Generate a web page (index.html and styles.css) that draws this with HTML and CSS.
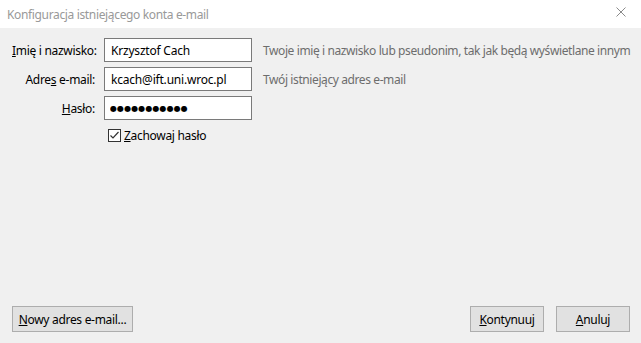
FILE: index.html
```html
<!DOCTYPE html>
<html lang="pl">
<head>
    <meta charset="UTF-8">
    <title>Konfiguracja istniejącego konta e-mail</title>
    <link rel="stylesheet" href="styles.css">
</head>
<body>
    <div class="window">
        <div class="titlebar">
            <span class="title">Konfiguracja istniejącego konta e-mail</span>
            <svg class="close" width="10" height="10" viewBox="0 0 10 10">
                <path d="M0.5 0.5 L9.5 9.5 M9.5 0.5 L0.5 9.5" stroke="#8a8a8a" stroke-width="1" fill="none"/>
            </svg>
        </div>
        <form class="content">
            <div class="fields">
                <label for="name"><u>I</u>mię i nazwisko:</label>
                <input type="text" id="name" value="Krzysztof Cach">
                <span class="hint">Twoje imię i nazwisko lub pseudonim, tak jak będą wyświetlane innym</span>

                <label for="email">Adre<u>s</u> e-mail:</label>
                <input type="text" id="email" value="kcach@ift.uni.wroc.pl">
                <span class="hint">Twój istniejący adres e-mail</span>

                <label for="pass"><u>H</u>asło:</label>
                <input type="text" id="pass" class="masked" value="●●●●●●●●●●●">
                <span></span>

                <span></span>
                <label class="remember">
                    <span class="checkbox">
                        <svg width="11" height="11" viewBox="0 0 11 11">
                            <path d="M1.5 5.5 L4 8 L9.5 2" stroke="#333" stroke-width="1.2" fill="none"/>
                        </svg>
                    </span>
                    <span><u>Z</u>achowaj hasło</span>
                </label>
                <span></span>
            </div>
            <div class="buttons">
                <button type="button" class="wide"><u>N</u>owy adres e-mail...</button>
                <div class="right">
                    <button type="button"><u>K</u>ontynuuj</button>
                    <button type="button"><u>A</u>nuluj</button>
                </div>
            </div>
        </form>
    </div>
</body>
</html>
```

FILE: styles.css
```css
html, body {
    margin: 0;
    padding: 0;
    height: 100%;
}
body {
    font-family: "Noto Sans", "Open Sans", sans-serif;
    font-size: 12px;
    color: #000;
    background: #f0f0f0;
    overflow: hidden;
}
.window {
    display: flex;
    flex-direction: column;
    height: 100vh;
}
.titlebar {
    height: 28px;
    background: #fff;
    display: flex;
    align-items: center;
    justify-content: space-between;
    padding: 0 7px 0 7px;
    flex-shrink: 0;
}
.title {
    color: #999;
    font-size: 12px;
    letter-spacing: -0.35px;
}
.close {
    margin-right: 8px;
    margin-top: -4px;
}
.content {
    flex: 1;
    display: flex;
    flex-direction: column;
    justify-content: space-between;
    padding: 10px 11px 11px 12px;
}
.fields {
    display: grid;
    grid-template-columns: 83px 148px auto;
    column-gap: 9px;
    row-gap: 5px;
    align-items: center;
}
.fields > label {
    text-align: right;
    white-space: nowrap;
    letter-spacing: -0.3px;
}
.fields input {
    box-sizing: border-box;
    height: 24px;
    width: 148px;
    border: 1px solid #7a7a7a;
    background: #fff;
    padding: 0 6px;
    font-family: inherit;
    font-size: 12px;
    letter-spacing: -0.2px;
    color: #000;
    outline: none;
}
.fields input.masked {
    font-family: "DejaVu Sans", sans-serif;
    font-size: 8px;
    letter-spacing: 0.1px;
    padding-left: 5px;
}
.hint {
    color: #6d6d6d;
    white-space: nowrap;
    margin-left: 2px;
    letter-spacing: -0.4px;
}
.remember {
    display: flex;
    align-items: center;
    gap: 3px;
    padding-left: 4px;
    margin-top: 2px;
    letter-spacing: -0.3px;
}
.checkbox {
    box-sizing: border-box;
    width: 13px;
    height: 13px;
    border: 1px solid #333;
    background: #fff;
    display: flex;
    align-items: center;
    justify-content: center;
}
.buttons {
    display: flex;
    justify-content: space-between;
    align-items: flex-end;
}
.right {
    display: flex;
    gap: 12px;
}
button {
    box-sizing: border-box;
    height: 26px;
    min-width: 74px;
    padding: 0 8px;
    background: #e1e1e1;
    border: 1px solid #adadad;
    font-family: inherit;
    font-size: 12px;
    letter-spacing: -0.3px;
    color: #000;
    white-space: nowrap;
}
button.wide {
    width: 121px;
    padding: 0 4px;
}
```
